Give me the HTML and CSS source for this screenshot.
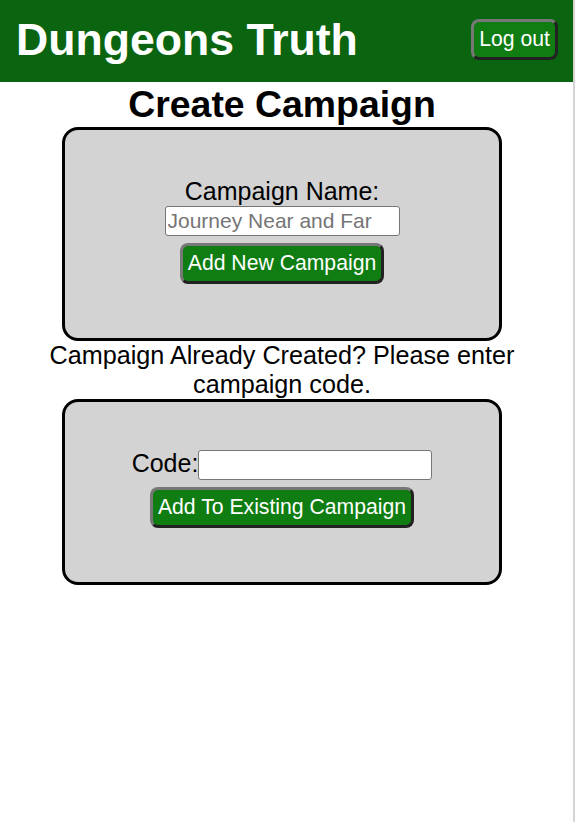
FILE: index.html
```html
<!DOCTYPE html>
<html lang="en">
<head>
<meta charset="utf-8">
<title>Dungeons Truth</title>
<link rel="stylesheet" href="styles.css">
</head>
<body>
<div class="page">
  <header class="topbar">
    <h1 class="brand">Dungeons Truth</h1>
    <button class="btn btn-logout" type="button">Log out</button>
  </header>
  <main class="main">
    <h2 class="heading">Create Campaign</h2>
    <form class="card card-new">
      <label class="label-block" for="cname">Campaign Name:</label>
      <input class="field" id="cname" type="text" placeholder="Journey Near and Far">
      <button class="btn" type="button">Add New Campaign</button>
    </form>
    <p class="note">Campaign Already Created? Please enter campaign code.</p>
    <form class="card card-code">
      <div class="row"><label class="label-inline" for="ccode">Code:</label><input class="field" id="ccode" type="text"></div>
      <button class="btn" type="button">Add To Existing Campaign</button>
    </form>
  </main>
</div>
</body>
</html>
```
FILE: styles.css
```css
html, body {
  margin: 0;
  padding: 0;
  background: #ffffff;
}
body {
  font-family: "Liberation Sans", Arial, Helvetica, sans-serif;
  color: #000;
}
.page {
  width: 573px;
  min-height: 100vh;
  border-right: 2px solid #d4d4d4;
  box-sizing: content-box;
}
.topbar {
  height: 82px;
  background: #0b640f;
  display: flex;
  align-items: center;
  justify-content: space-between;
  padding: 0 15px 0 16px;
  box-sizing: border-box;
}
.brand {
  margin: 0;
  color: #fff;
  font-size: 44.6px;
  font-weight: bold;
  line-height: 50px;
  margin-top: -2px;
}
.btn {
  font-family: "Liberation Sans", Arial, Helvetica, sans-serif;
  font-size: 21.2px;
  line-height: 24px;
  color: #fff;
  background: #0f7d12;
  border: 3px solid;
  border-color: #777 #222 #222 #777;
  border-radius: 8px;
  padding: 5px 5px 6px;
  cursor: pointer;
}
.btn-logout {
  margin-top: -3px;
}
.main {
  margin-right: 9px;
  text-align: center;
}
.heading {
  margin: 0;
  font-size: 37.4px;
  line-height: 45px;
  font-weight: bold;
}
.card {
  width: 440px;
  box-sizing: border-box;
  margin: 0 auto;
  background: #d3d3d3;
  border: 3px solid #000;
  border-radius: 16px;
  padding: 47px 0 54px;
  display: flex;
  flex-direction: column;
  align-items: center;
  gap: 7px;
  font-size: 25px;
}
.card-new {
  gap: 0;
}
.card-new .field {
  margin-bottom: 7px;
}
.label-block {
  display: block;
  line-height: 29px;
}
.row {
  display: flex;
  align-items: baseline;
}
.label-inline {
  line-height: 29px;
}
.field {
  width: 235px;
  height: 30px;
  box-sizing: border-box;
  font-family: "Liberation Sans", Arial, Helvetica, sans-serif;
  font-size: 21px;
  padding: 0 2px;
  border: 1px solid #767676;
  border-radius: 3px;
  background: #fff;
  margin: 0;
}
.field::placeholder {
  color: #757575;
}
.card-code .field {
  width: 234px;
}
.note {
  margin: 0;
  font-size: 25.2px;
  line-height: 29px;
}
```
